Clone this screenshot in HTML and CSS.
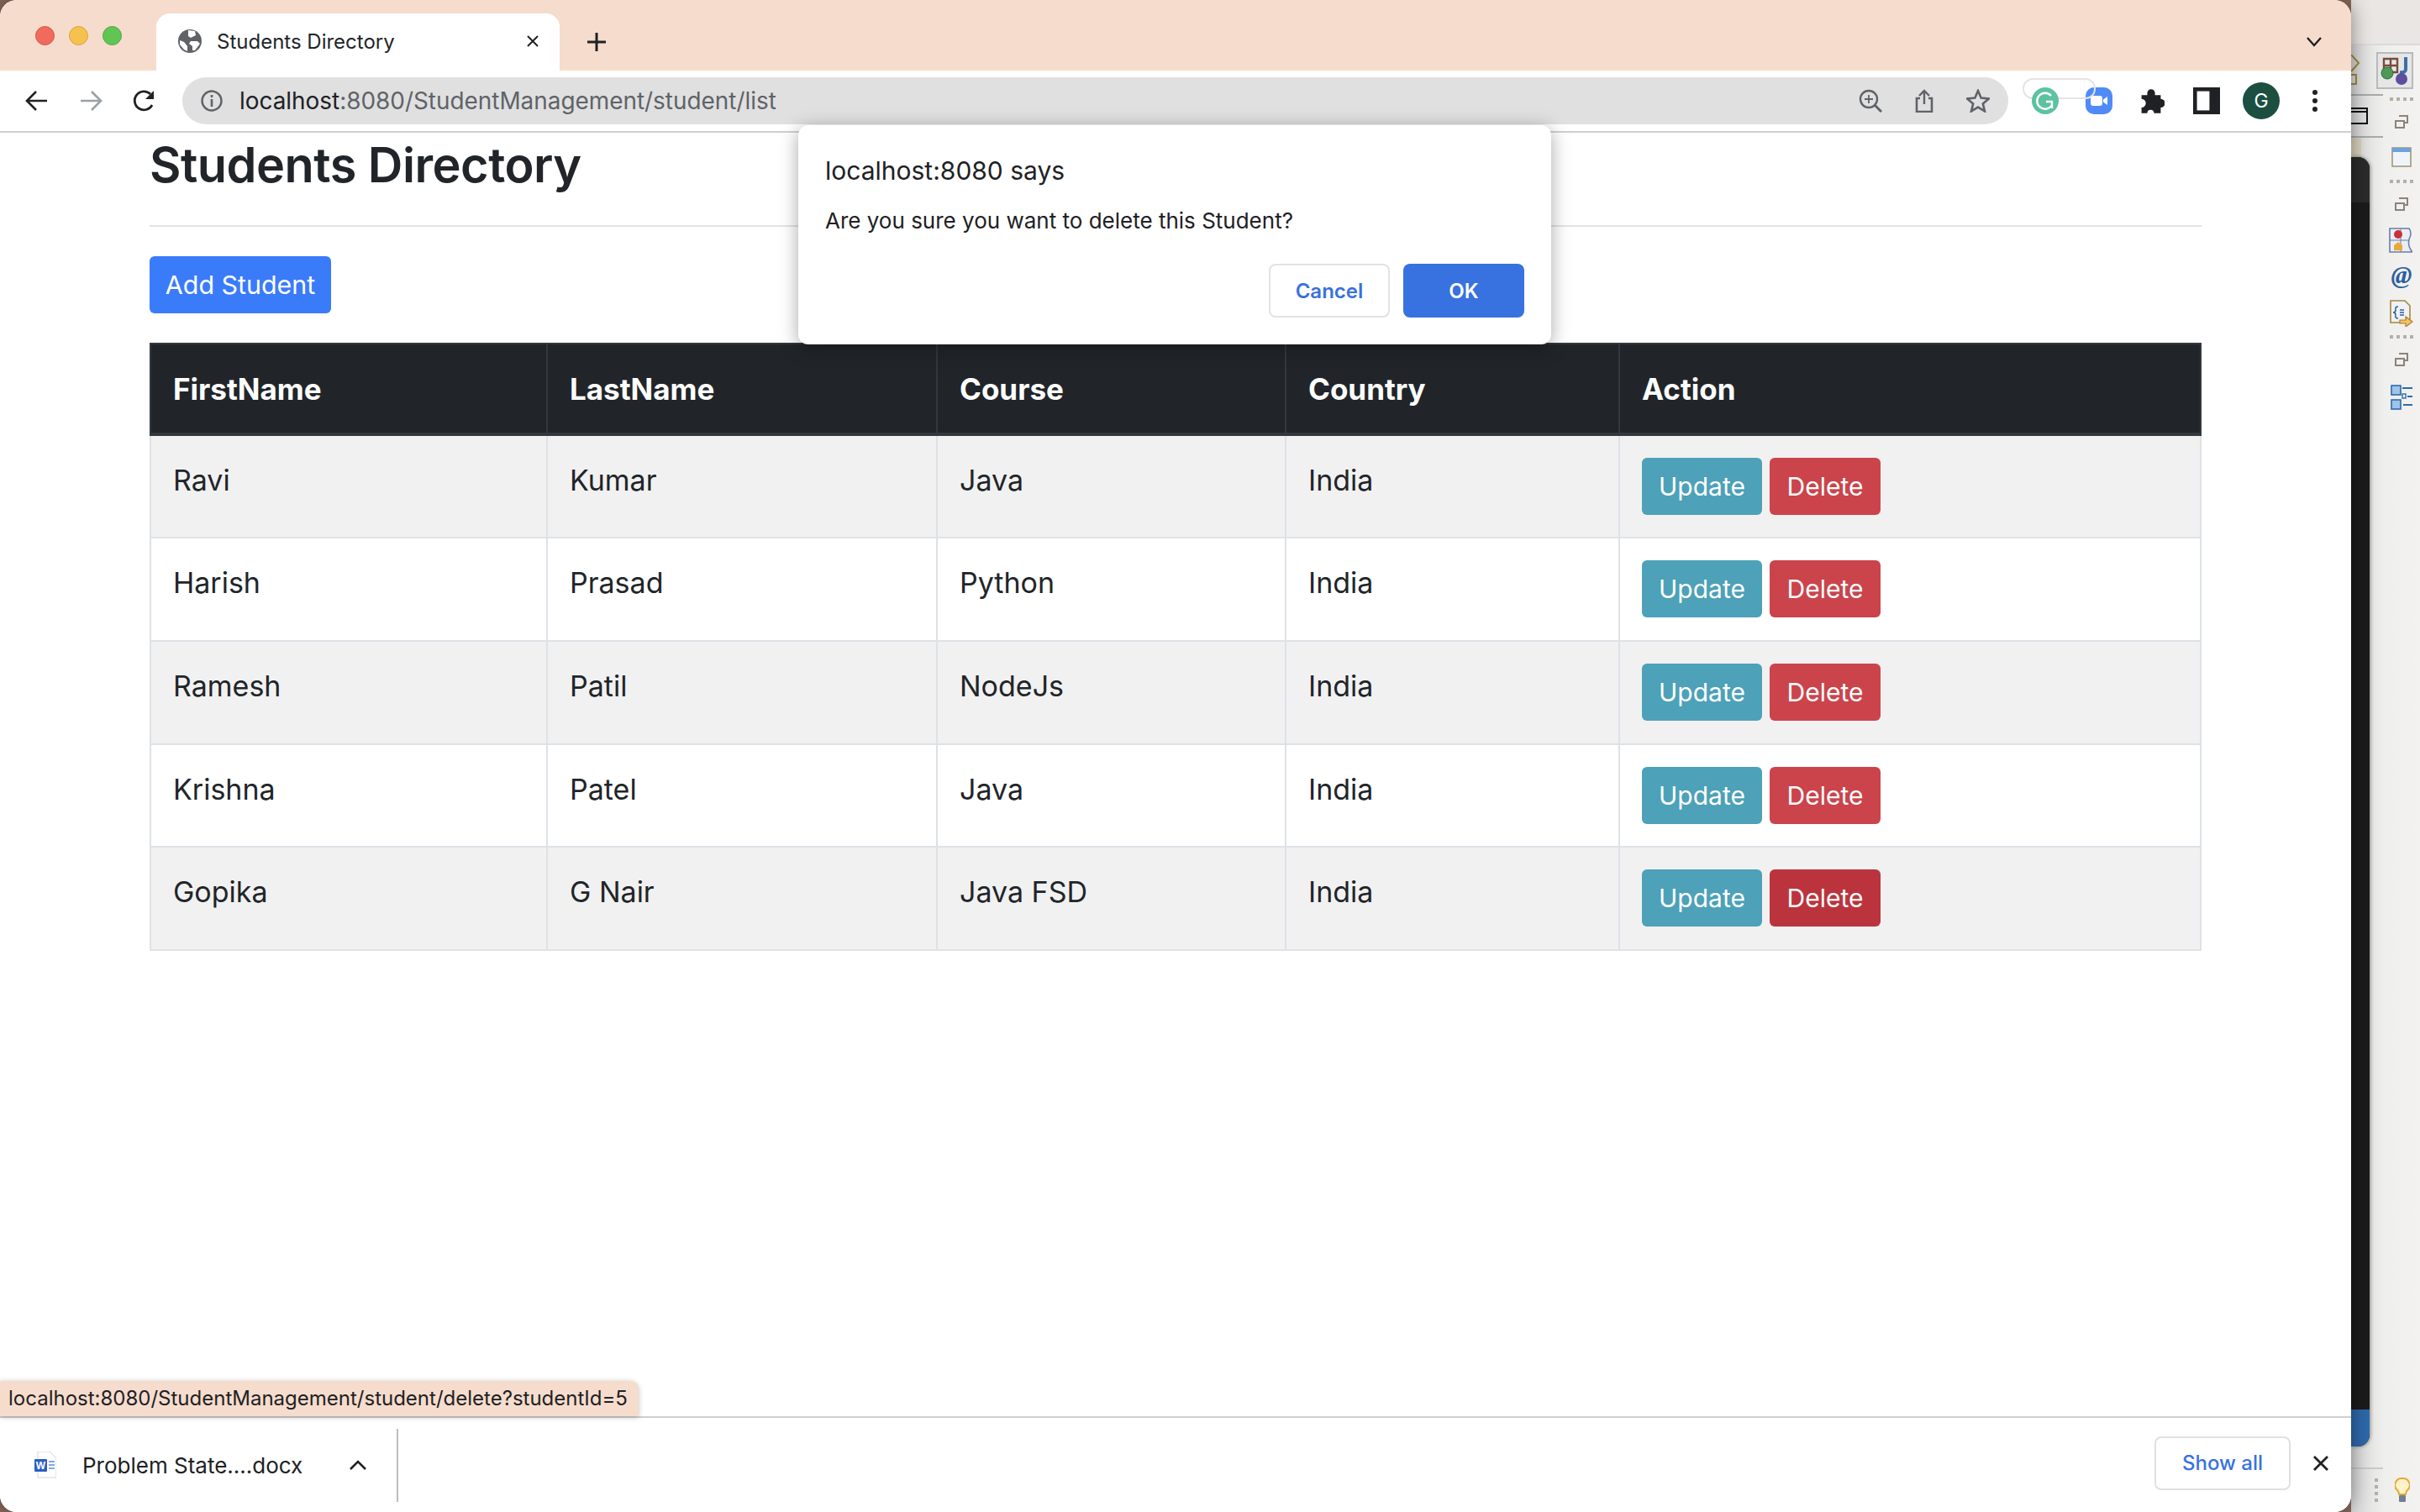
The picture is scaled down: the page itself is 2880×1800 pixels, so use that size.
FILE: index.html
```html
<!DOCTYPE html>
<html>
<head>
    <title>Students Directory</title>
    <link rel="stylesheet" href="styles.css">
</head>
<body>
<div class="desktop">
    <div class="window">
        <div class="tabstrip">
            <div class="traffic">
                <span class="light light-red"></span>
                <span class="light light-yellow"></span>
                <span class="light light-green"></span>
            </div>
            <div class="tab">
                <svg class="favicon" viewBox="0 0 28 28">
                    <circle cx="14" cy="14" r="14" fill="#5f6368"/>
                    <path d="M12 1 L20 2 L21 7 L15 10 L12 8 Z M15 14 L23 14 L26 17 L20 25 L17 25 L17 20 L13 17 Z M2 13 L7 15 L11 20 L11 26 L7 24 L2 18 Z" fill="#fff"/>
                </svg>
                <span class="tab-title">Students Directory</span>
                <svg class="tab-close" viewBox="0 0 16 16"><path d="M2 2 L14 14 M14 2 L2 14" stroke="#202124" stroke-width="2"/></svg>
            </div>
            <svg class="new-tab" viewBox="0 0 24 24"><path d="M12 1 V23 M1 12 H23" stroke="#202124" stroke-width="3"/></svg>
            <svg class="tab-search" viewBox="0 0 18 12"><path d="M1 1 L9 10 L17 1" fill="none" stroke="#202124" stroke-width="2.4"/></svg>
        </div>
        <div class="toolbar">
            <svg class="nav-icon" viewBox="0 0 28 28"><path d="M26 14 H3 M13 3 L2 14 L13 25" fill="none" stroke="#202124" stroke-width="2.6"/></svg>
            <svg class="nav-icon" viewBox="0 0 28 28"><path d="M2 14 H25 M15 3 L26 14 L15 25" fill="none" stroke="#9aa0a6" stroke-width="2.6"/></svg>
            <svg class="nav-icon" viewBox="0 0 28 28"><path d="M23 19 A11 11 0 1 1 21 6" fill="none" stroke="#202124" stroke-width="2.8"/><path d="M25 2 V12 H15 Z" fill="#202124"/></svg>
            <div class="omnibox">
                <svg class="info-icon" viewBox="0 0 26 26">
                    <circle cx="13" cy="13" r="11.5" fill="none" stroke="#5f6368" stroke-width="2.4"/>
                    <path d="M13 11 V20 M13 6 V9" stroke="#5f6368" stroke-width="2.6"/>
                </svg>
                <div class="url"><span class="url-host">localhost</span>:8080/StudentManagement/student/list</div>
                <svg class="omni-icon" viewBox="0 0 28 28">
                    <circle cx="12" cy="12" r="10" fill="none" stroke="#5f6368" stroke-width="2.4"/>
                    <path d="M12 7 V17 M7 12 H17" stroke="#5f6368" stroke-width="1.8"/>
                    <path d="M19 19 L27 27" stroke="#5f6368" stroke-width="3"/>
                </svg>
                <svg class="omni-icon" viewBox="0 0 28 28">
                    <path d="M9 11 H5 V27 H23 V11 H19" fill="none" stroke="#5f6368" stroke-width="2.6"/>
                    <path d="M14 18 V2 M8 8 L14 2 L20 8" fill="none" stroke="#5f6368" stroke-width="2.4"/>
                </svg>
                <svg class="omni-icon" viewBox="0 0 28 28"><path d="M14 2 L17.6 10.6 L27 11.4 L19.8 17.4 L22 26.4 L14 21.6 L6 26.4 L8.2 17.4 L1 11.4 L10.4 10.6 Z" fill="none" stroke="#5f6368" stroke-width="2.6"/></svg>
            </div>
            <div class="extensions">
                <div class="grammarly-wrap">
                    <span class="ext-pill"></span>
                    <svg class="grammarly" viewBox="0 0 32 32">
                        <circle cx="16" cy="16" r="16" fill="#5cc2a0"/>
                        <path d="M23 10 A9.5 9.5 0 1 0 24 21 M24 25 V17 H17" fill="none" stroke="#fff" stroke-width="2.4"/>
                    </svg>
                </div>
                <svg class="ext-icon" viewBox="0 0 32 32">
                    <rect width="32" height="32" rx="10" fill="#4f8af7"/>
                    <rect x="6" y="10" width="14" height="12" rx="3" fill="#fff"/>
                    <path d="M21 14.5 L26 11 V21 L21 17.5 Z" fill="#fff"/>
                </svg>
                <svg class="ext-icon ext-puzzle" viewBox="0 0 28 28">
                    <path d="M4 8 H10 V6 A4 4 0 0 1 18 6 V8 H24 V12 A4.5 4.5 0 0 1 24 21 V27 H17 A3.5 3.5 0 0 0 10 27 H4 V21 A4.5 4.5 0 0 0 4 12 Z" fill="#202124"/>
                </svg>
                <svg class="ext-icon" viewBox="0 0 28 28">
                    <rect width="28" height="28" fill="#202124"/>
                    <rect x="4" y="4" width="13" height="20" fill="#fff"/>
                </svg>
                <div class="avatar">G</div>
                <svg class="menu-icon" viewBox="0 0 8 28">
                    <circle cx="4" cy="4" r="3" fill="#202124"/>
                    <circle cx="4" cy="14" r="3" fill="#202124"/>
                    <circle cx="4" cy="24" r="3" fill="#202124"/>
                </svg>
            </div>
        </div>

        <div class="page">
            <h2 class="page-title">Students Directory</h2>
            <hr class="rule">
            <a class="btn btn-add">Add Student</a>
            <table class="students">
                <thead>
                    <tr>
                        <th class="col-first">FirstName</th>
                        <th class="col-last">LastName</th>
                        <th class="col-course">Course</th>
                        <th class="col-country">Country</th>
                        <th class="col-action">Action</th>
                    </tr>
                </thead>
                <tbody>
                    <tr>
                        <td>Ravi</td><td>Kumar</td><td>Java</td><td>India</td>
                        <td class="actions"><a class="btn btn-update">Update</a> <a class="btn btn-delete">Delete</a></td>
                    </tr>
                    <tr>
                        <td>Harish</td><td>Prasad</td><td>Python</td><td>India</td>
                        <td class="actions"><a class="btn btn-update">Update</a> <a class="btn btn-delete">Delete</a></td>
                    </tr>
                    <tr>
                        <td>Ramesh</td><td>Patil</td><td>NodeJs</td><td>India</td>
                        <td class="actions"><a class="btn btn-update">Update</a> <a class="btn btn-delete">Delete</a></td>
                    </tr>
                    <tr>
                        <td>Krishna</td><td>Patel</td><td>Java</td><td>India</td>
                        <td class="actions"><a class="btn btn-update">Update</a> <a class="btn btn-delete">Delete</a></td>
                    </tr>
                    <tr>
                        <td>Gopika</td><td>G Nair</td><td>Java FSD</td><td>India</td>
                        <td class="actions"><a class="btn btn-update">Update</a> <a class="btn btn-delete btn-hover">Delete</a></td>
                    </tr>
                </tbody>
            </table>

            <div class="status-bubble">localhost:8080/StudentManagement/student/delete?studentId=5</div>
        </div>

        <div class="downloads">
            <div class="download-item">
                <svg class="word-icon" viewBox="0 0 26 32">
                    <path d="M4 0 H18 L26 8 V31 H4 Z" fill="#fff" stroke="#d5d7da" stroke-width="1"/>
                    <rect x="0" y="9" width="15" height="15" rx="1" fill="#2b5fc1"/>
                    <text x="7.5" y="21" class="word-letter">W</text>
                    <path d="M17 12 H24 M17 16 H24 M17 20 H24" stroke="#5b8ce0" stroke-width="1.6"/>
                </svg>
                <span class="file-name">Problem State....docx</span>
                <svg class="file-chevron" viewBox="0 0 20 12"><path d="M1 11 L10 2 L19 11" fill="none" stroke="#202124" stroke-width="2.6"/></svg>
            </div>
            <a class="show-all">Show all</a>
            <svg class="shelf-close" viewBox="0 0 20 20"><path d="M2 2 L18 18 M18 2 L2 18" stroke="#202124" stroke-width="2.8"/></svg>
        </div>

        <div class="dialog">
            <div class="dialog-title">localhost:8080 says</div>
            <div class="dialog-text">Are you sure you want to delete this Student?</div>
            <div class="dialog-buttons">
                <button class="dlg-btn dlg-cancel">Cancel</button>
                <button class="dlg-btn dlg-ok">OK</button>
            </div>
        </div>
    </div>

    <div class="ide">
        <div class="ide-top">
            <svg class="ide-part" viewBox="0 0 44 44">
                <rect x="1" y="1" width="42" height="42" fill="#e6e6e6" stroke="#b9b9b9" stroke-width="2"/>
                <path d="M9 8 H25 V24 H9 Z M17 8 V24 M9 16 H25" fill="none" stroke="#7a4b3a" stroke-width="2.4"/>
                <path d="M35 6 V20 Q35 25 28 24" fill="none" stroke="#3d6fa8" stroke-width="4"/>
                <circle cx="30" cy="32" r="7" fill="#5d4fa0"/>
                <circle cx="13" cy="25" r="7" fill="#4c9a55" stroke="#2f6b3a"/>
            </svg>
        </div>
        <svg class="ide-peek ide-peek-diamond" viewBox="0 0 10 36"><path d="M0 0 L9 10 L0 20 M0 24 H6 V35 H0" fill="none" stroke="#a8873a" stroke-width="2"/></svg>
        <svg class="ide-peek ide-peek-window" viewBox="0 0 20 20"><path d="M0 1 H19 V19 H0 M0 5 H19" fill="none" stroke="#111" stroke-width="2"/></svg>
        <div class="ide-line ide-line-a"></div>
        <div class="ide-line ide-line-b"></div>
        <div class="ide-tan"></div>
        <div class="console">
            <div class="console-head"></div>
            <div class="console-blue"></div>
        </div>
        <div class="ide-tools">
            <span class="grip"></span>
            <svg class="tool tool-restore" viewBox="0 0 16 16"><path d="M5 1 H15 V9 H11 M1 7 H11 V15 H1 Z" fill="none" stroke="#8c8378" stroke-width="2"/></svg>
            <svg class="tool tool-pane" viewBox="0 0 24 24"><rect x="1" y="1" width="22" height="22" fill="#eef4fa" stroke="#a3977a" stroke-width="1.6"/><rect x="1" y="1" width="22" height="5" fill="#6fa3d8"/></svg>
            <span class="grip"></span>
            <svg class="tool tool-restore" viewBox="0 0 16 16"><path d="M5 1 H15 V9 H11 M1 7 H11 V15 H1 Z" fill="none" stroke="#8c8378" stroke-width="2"/></svg>
            <svg class="tool tool-map" viewBox="0 0 28 30">
                <path d="M1 1 H24 Q28 6 24 14 Q22 22 28 29 H1 Z" fill="#e9eef5" stroke="#6c7ea3" stroke-width="1.6"/>
                <path d="M1 15 H24 M14 1 V29" stroke="#6c7ea3" stroke-width="1"/>
                <circle cx="11" cy="8" r="5" fill="#c9303a"/>
                <path d="M6 27 V21 L11 17 L16 21 V27 Z" fill="#eba83a"/>
            </svg>
            <span class="tool-at">@</span>
            <svg class="tool tool-json" viewBox="0 0 28 32">
                <path d="M1 1 H18 L24 7 V27 H1 Z" fill="#eef2f7" stroke="#a8873a" stroke-width="1.6"/>
                <path d="M10 8 Q6 8 7 12 Q7 15 4 15 Q7 15 7 18 Q6 22 10 22 M12 12 H17 M12 15 H17 M12 18 H17" fill="none" stroke="#2d5f9e" stroke-width="1.5"/>
                <path d="M12 24 H19 V20 L27 26 L19 32 V28 H12 Z" fill="#eec36a" stroke="#b27d2a" stroke-width="1.2"/>
            </svg>
            <span class="grip"></span>
            <svg class="tool tool-restore" viewBox="0 0 16 16"><path d="M5 1 H15 V9 H11 M1 7 H11 V15 H1 Z" fill="none" stroke="#8c8378" stroke-width="2"/></svg>
            <svg class="tool tool-outline" viewBox="0 0 26 30">
                <rect x="1" y="1" width="11" height="11" fill="#9ec4ea" stroke="#2d6cab" stroke-width="1.6"/>
                <rect x="1" y="18" width="11" height="11" fill="#9ec4ea" stroke="#2d6cab" stroke-width="1.6"/>
                <path d="M14 4 H26 M15 24 H26 M20 14 H26" stroke="#2d6cab" stroke-width="2"/>
                <rect x="14" y="11" width="4" height="5" fill="none" stroke="#2d6cab" stroke-width="1.4"/>
            </svg>
        </div>
        <div class="ide-foot">
            <div class="ide-foot-line"></div>
            <div class="ide-foot-row">
                <span class="grip-v"></span>
                <svg class="bulb" viewBox="0 0 18 30">
                    <path d="M9 1 A8 8 0 0 1 15 15 Q13 17 13 20 H5 Q5 17 3 15 A8 8 0 0 1 9 1 Z" fill="#fdf3c8" stroke="#e8a93a" stroke-width="2"/>
                    <rect x="5" y="21" width="8" height="8" rx="1" fill="#6f7f96"/>
                </svg>
            </div>
        </div>
    </div>
</div>
</body>
</html>
```

FILE: styles.css
```css
/* whole screenshot: browser window on the left, bit of the IDE behind it */
* {
    box-sizing: border-box;
}

html, body {
    margin: 0;
    padding: 0;
}

body {
    font-family: Inter, "Noto Sans", "Liberation Sans", sans-serif;
    color: #212529;
    background-color: #8a6a5c;
}

.desktop {
    display: flex;
    width: 2880px;
    height: 1800px;
    overflow: hidden;
}

.window {
    position: relative;
    display: flex;
    flex-direction: column;
    width: 2798px;
    height: 1800px;
    flex-shrink: 0;
    background-color: #fff;
    border-radius: 20px;
    overflow: hidden;
    z-index: 2;
    box-shadow: 0 0 24px rgba(0, 0, 0, 0.45);
}

/* tab strip */
.tabstrip {
    display: flex;
    align-items: center;
    height: 84px;
    background-color: #f6dccd;
    flex-shrink: 0;
}

.traffic {
    display: flex;
    gap: 17px;
    width: 186px;
    padding-left: 42px;
}

.light {
    width: 23px;
    height: 23px;
    border-radius: 50%;
}

.light-red {
    background-color: #f16a5e;
    border: 1px solid #d9534a;
}

.light-yellow {
    background-color: #f7c14f;
    border: 1px solid #d9a33e;
}

.light-green {
    background-color: #61c554;
    border: 1px solid #4fa945;
}

.tab {
    display: flex;
    align-items: center;
    width: 480px;
    height: 68px;
    margin-top: 16px;
    padding: 0 24px 0 26px;
    background-color: #fff;
    border-radius: 16px 16px 0 0;
}

.favicon {
    width: 28px;
    height: 28px;
    margin-right: 18px;
    margin-top: -2px;
}

.tab-title {
    flex: 1;
    font-size: 24px;
    margin-top: -2px;
}

.tab-close {
    width: 16px;
    height: 16px;
    margin-top: -2px;
}

.new-tab {
    width: 24px;
    height: 24px;
    margin-left: 32px;
    margin-top: 16px;
}

.tab-search {
    width: 18px;
    height: 12px;
    margin-left: auto;
    margin-right: 35px;
    margin-top: 16px;
}

/* address bar row */
.toolbar {
    display: flex;
    align-items: center;
    height: 74px;
    padding: 0 0 0 30px;
    background-color: #fff;
    border-bottom: 2px solid #cfcfcf;
    flex-shrink: 0;
}

.nav-icon {
    width: 28px;
    height: 28px;
    margin-right: 36px;
}

.omnibox {
    display: flex;
    align-items: center;
    width: 2173px;
    height: 56px;
    margin-left: -5px;
    padding: 0 22px 0 22px;
    background-color: #e0e0e0;
    border-radius: 28px;
}

.info-icon {
    width: 26px;
    height: 26px;
    margin-right: 20px;
}

.url {
    flex: 1;
    font-size: 27.9px;
    color: #5f6368;
}

.url-host {
    color: #202124;
}

.omni-icon {
    width: 28px;
    height: 28px;
    margin-left: 36px;
}

.extensions {
    display: flex;
    align-items: center;
    flex: 1;
    padding-left: 28px;
}

.grammarly-wrap {
    position: relative;
    width: 32px;
    height: 32px;
    margin-right: 32px;
}

.ext-pill {
    position: absolute;
    left: -11px;
    top: -11px;
    width: 87px;
    height: 25px;
    border: 2px solid #e4e4e4;
    border-radius: 12px;
}

.grammarly {
    position: relative;
    display: block;
    width: 32px;
    height: 32px;
}

.ext-icon {
    width: 32px;
    height: 32px;
    margin-right: 32px;
}

.ext-puzzle {
    margin-left: -2px;
    margin-right: 34px;
}

.avatar {
    width: 44px;
    height: 44px;
    margin-left: -5px;
    margin-right: 38px;
    border-radius: 50%;
    background-color: #1c4f40;
    color: #fff;
    font-size: 23px;
    line-height: 44px;
    text-align: center;
}

.menu-icon {
    width: 8px;
    height: 28px;
}

/* page content */
.page {
    position: relative;
    flex: 1;
    padding: 0 178px;
    background-color: #fff;
}

.page-title {
    margin: 0;
    padding-top: 4px;
    font-size: 57.6px;
    font-weight: 600;
    letter-spacing: -0.5px;
    line-height: 1.2;
    color: #212529;
}

.rule {
    margin: 37px 0 35px 0;
    height: 2px;
    border: none;
    background-color: #e3e3e3;
}

.btn {
    display: inline-block;
    height: 68px;
    font-size: 30.4px;
    line-height: 68px;
    color: #fff;
    border-radius: 6px;
}

.btn-add {
    display: block;
    width: 216px;
    background-color: #3a7bfa;
    text-align: center;
}

.btn-update {
    width: 143px;
    text-align: center;
    background-color: #4da1b8;
}

.btn-delete {
    width: 132px;
    text-align: center;
    background-color: #cb444c;
    margin-left: 9px;
}

.btn-hover {
    background-color: #bb343d;
}

.students {
    width: 2440px;
    margin-top: 35px;
    table-layout: fixed;
    border-collapse: collapse;
}

.col-first { width: 472px; }
.col-last { width: 464px; }
.col-course { width: 415px; }
.col-country { width: 397px; }
.col-action { width: 692px; }

.students th {
    height: 108px;
    padding: 0 26px;
    font-size: 35px;
    font-weight: 700;
    text-align: left;
    color: #fff;
    background-color: #212529;
    border: 2px solid #32383e;
    border-bottom-width: 4px;
}

.students td {
    height: 122.8px;
    padding: 31px 26px 0 26px;
    font-size: 34px;
    line-height: 43px;
    vertical-align: top;
    border: 2px solid #dee2e6;
    color: #212529;
}

.students td.actions {
    padding-top: 26px;
    font-size: 0;
    line-height: 0;
}

.students td .btn {
    font-size: 30px;
    line-height: 68px;
}

.students tbody tr:nth-child(odd) td {
    background-color: #f1f1f1;
}

/* link hover bubble */
.status-bubble {
    position: absolute;
    left: 0;
    bottom: 0;
    width: 760px;
    height: 42px;
    padding-left: 10px;
    font-size: 24px;
    line-height: 42px;
    white-space: nowrap;
    color: #202124;
    background-color: #f6dccd;
    border-radius: 0 10px 0 0;
    box-shadow: 0 1px 6px rgba(0, 0, 0, 0.25);
}

/* download shelf */
.downloads {
    display: flex;
    align-items: center;
    height: 114px;
    padding-right: 26px;
    background-color: #fff;
    border-top: 2px solid #cfcfcf;
    flex-shrink: 0;
}

.download-item {
    display: flex;
    align-items: center;
    width: 474px;
    height: 87px;
    padding-left: 41px;
    border-right: 2px solid #bdbdbd;
}

.word-icon {
    width: 26px;
    height: 32px;
    margin-right: 31px;
}

.word-letter {
    font-family: "Liberation Sans", sans-serif;
    font-size: 12px;
    font-weight: 700;
    fill: #fff;
    text-anchor: middle;
}

.file-name {
    width: 318px;
    font-size: 26px;
    color: #202124;
}

.file-chevron {
    width: 20px;
    height: 12px;
}

.show-all {
    width: 162px;
    height: 64px;
    margin-left: auto;
    margin-right: 26px;
    margin-top: -4px;
    font-size: 24px;
    font-weight: 500;
    line-height: 60px;
    text-align: center;
    color: #3871e0;
    border: 2px solid #e0e0e0;
    border-radius: 8px;
}

.shelf-close {
    width: 20px;
    height: 20px;
    margin-top: -4px;
}

/* js confirm dialog */
.dialog {
    position: absolute;
    left: 950px;
    top: 149px;
    width: 896px;
    height: 261px;
    padding: 35px 32px 0 32px;
    background-color: #fff;
    border-radius: 12px;
    box-shadow: 0 4px 22px rgba(0, 0, 0, 0.35);
}

.dialog-title {
    font-size: 30px;
    line-height: 38px;
    color: #202124;
}

.dialog-text {
    margin-top: 22px;
    font-size: 26px;
    line-height: 38px;
    color: #202124;
}

.dialog-buttons {
    display: flex;
    justify-content: flex-end;
    gap: 16px;
    margin-top: 32px;
}

.dlg-btn {
    width: 144px;
    height: 64px;
    font-family: Inter, sans-serif;
    font-size: 24px;
    font-weight: 600;
    border-radius: 8px;
}

.dlg-cancel {
    background-color: #fff;
    color: #3871e0;
    border: 2px solid #e3e3e3;
}

.dlg-ok {
    background-color: #3871e0;
    color: #fff;
    border: none;
}

/* eclipse window peeking out on the right */
.ide {
    position: relative;
    flex: 1;
    background: linear-gradient(90deg, #d8d8d8 0, #efefee 40px, #f3f2f1 100%);
}

.ide-top {
    height: 54px;
    background-color: #e9e6e3;
    border-bottom: 2px solid #dcdad8;
}

.ide-part {
    position: absolute;
    left: 30px;
    top: 62px;
    width: 44px;
    height: 44px;
}

.ide-peek {
    position: absolute;
    left: 0;
}

.ide-peek-diamond {
    top: 65px;
    width: 10px;
    height: 36px;
}

.ide-peek-window {
    top: 128px;
    width: 20px;
    height: 20px;
}

.ide-line {
    position: absolute;
    left: 0;
    width: 38px;
    height: 2px;
    background-color: #a9a9a9;
}

.ide-line-a { top: 112px; }
.ide-line-b { top: 162px; }

.ide-tan {
    position: absolute;
    left: 0;
    top: 165px;
    width: 12px;
    height: 24px;
    background-color: #dcd2bd;
}

.console {
    position: absolute;
    left: 0;
    top: 187px;
    width: 22px;
    height: 1535px;
    overflow: hidden;
    background-color: #1b1b1b;
    border-radius: 0 14px 14px 0;
    box-shadow: 1px 0 4px rgba(0, 0, 0, 0.4);
}

.console-head {
    height: 54px;
    background-color: #2b2b2b;
}

.console-blue {
    position: absolute;
    left: 0;
    bottom: 0;
    width: 100%;
    height: 44px;
    background-color: #2e69ab;
}

.ide-tools {
    position: absolute;
    left: 46px;
    top: 116px;
    width: 28px;
    display: flex;
    flex-direction: column;
    align-items: center;
}

.grip {
    width: 28px;
    height: 4px;
    background-image: repeating-linear-gradient(90deg, #b4afa6 0, #b4afa6 4px, transparent 4px, transparent 8px);
}

.tool {
    display: block;
}

.tool-restore {
    width: 16px;
    height: 16px;
    margin: 17px 0 22px 0;
}

.tool-pane {
    width: 24px;
    height: 24px;
    margin-bottom: 15px;
}

.tool-map {
    width: 28px;
    height: 30px;
    margin-top: -2px;
    margin-left: -2px;
}

.tool-at {
    margin-top: 9px;
    font-family: "Liberation Serif", serif;
    font-size: 30px;
    font-style: italic;
    font-weight: 700;
    line-height: 34px;
    color: #2d5f9e;
}

.tool-json {
    width: 28px;
    height: 32px;
    margin-top: 13px;
    margin-bottom: 10px;
}

.tool-outline {
    width: 26px;
    height: 30px;
}

.ide-foot {
    position: absolute;
    left: 0;
    top: 1747px;
    width: 100%;
}

.ide-foot-line {
    width: 38px;
    height: 2px;
    background-color: #c9c9c9;
}

.ide-foot-row {
    display: flex;
    align-items: center;
    gap: 20px;
    padding: 10px 0 0 28px;
}

.grip-v {
    width: 4px;
    height: 28px;
    background-image: repeating-linear-gradient(180deg, #b4afa6 0, #b4afa6 4px, transparent 4px, transparent 8px);
}

.bulb {
    width: 18px;
    height: 30px;
}
```
